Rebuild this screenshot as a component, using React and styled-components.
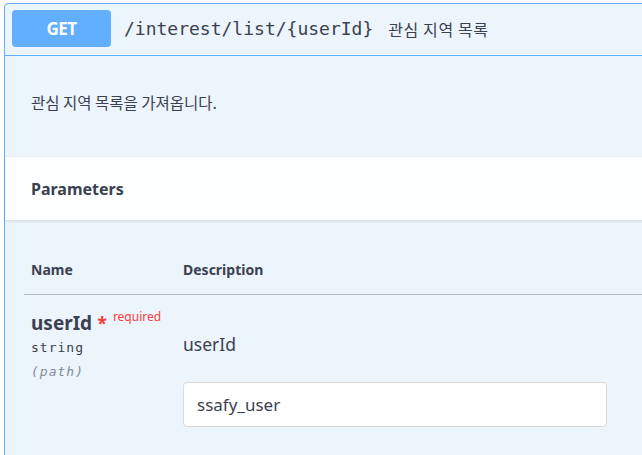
import React from 'react'
import styled, { createGlobalStyle } from 'styled-components'

const GlobalStyle = createGlobalStyle`
  body {
    margin: 0;
    background: #ffffff;
    overflow: hidden;
    font-family: "Noto Sans", "Noto Sans CJK KR", sans-serif;
    color: #3b4151;
  }
`

const Opblock = styled.section`
  margin: 3px -30px 0 4px;
  border: 1px solid #61affe;
  border-radius: 4px 0 0 0;
  background: #ecf4fc;
`

const Summary = styled.div`
  display: flex;
  align-items: center;
  padding: 6px 0 8px 7px;
  border-bottom: 1px solid #61affe;
`

const Method = styled.span`
  display: flex;
  align-items: center;
  justify-content: center;
  width: 99px;
  height: 37px;
  border-radius: 4px;
  background: #61affe;
  color: #ffffff;
  font-weight: 700;
  font-size: 17px;
  letter-spacing: -0.5px;
`

const Path = styled.span`
  margin-left: 13px;
  font-family: "DejaVu Sans Mono", "Liberation Mono", monospace;
  font-size: 18px;
  color: #3b4151;
`

const SummaryText = styled.span`
  margin-left: 15px;
  font-family: "Noto Sans CJK KR", sans-serif;
  font-size: 16px;
  letter-spacing: 0.6px;
  color: #3b4151;
`

const Description = styled.div`
  padding: 33px 26px 42px;
  font-family: "Noto Sans CJK KR", sans-serif;
  font-size: 15.5px;
  line-height: 26px;
  color: #3b4151;
`

const SectionHeader = styled.div`
  display: flex;
  align-items: center;
  height: 63px;
  padding-left: 26px;
  background: rgba(255, 255, 255, 0.85);
  box-shadow: 0 1px 3px rgba(0, 0, 0, 0.12);
`

const SectionTitle = styled.h4`
  margin: 0;
  font-size: 16px;
  font-weight: 700;
  color: #3b4151;
`

const Table = styled.div`
  padding: 0 0 30px 19px;
`

const HeadRow = styled.div`
  display: flex;
  padding: 40px 0 14px 7px;
  border-bottom: 1px solid #b4bcc6;
`

const HeadCell = styled.div`
  width: ${(p) => p.w || 'auto'};
  font-size: 14px;
  font-weight: 700;
  line-height: 20px;
  color: #3b4151;
`

const Row = styled.div`
  display: flex;
  padding: 16px 0 0 7px;
`

const NameCol = styled.div`
  width: 152px;
  flex-shrink: 0;
`

const ParamName = styled.div`
  display: flex;
  align-items: flex-start;
  font-size: 19px;
  font-weight: 700;
  line-height: 24px;
  color: #3b4151;
`

const Required = styled.span`
  margin-left: 5px;
  color: #f93e3e;
  font-size: 18px;
  line-height: 24px;
  font-weight: 700;
`

const RequiredLabel = styled.sup`
  margin-left: 6px;
  margin-top: -4px;
  font-size: 12px;
  font-weight: 400;
  line-height: 20px;
  color: #f93e3e;
`

const ParamType = styled.div`
  margin-top: 2px;
  font-family: "DejaVu Sans Mono", "Liberation Mono", monospace;
  font-size: 13px;
  line-height: 22px;
  letter-spacing: 1px;
  color: #3b4151;
  font-style: ${(p) => (p.italic ? 'italic' : 'normal')};
  opacity: ${(p) => (p.italic ? 0.6 : 1)};
`

const DescCol = styled.div`
  display: flex;
  flex-direction: column;
`

const ParamDesc = styled.div`
  margin-top: 20px;
  font-size: 17.5px;
  line-height: 26px;
  color: #3b4151;
`

const Input = styled.input`
  box-sizing: border-box;
  margin-top: 25px;
  width: 424px;
  height: 45px;
  padding: 0 13px;
  border: 1px solid #d9d9d9;
  border-radius: 4px;
  background: #ffffff;
  font-family: "Noto Sans", sans-serif;
  font-size: 17px;
  color: #3b4151;
  outline: none;
`

export default function App() {
  return (
    <>
      <GlobalStyle />
      <Opblock>
        <Summary>
          <Method>GET</Method>
          <Path>/interest/list/&#123;userId&#125;</Path>
          <SummaryText>관심 지역 목록</SummaryText>
        </Summary>
        <Description>관심 지역 목록을 가져옵니다.</Description>
        <SectionHeader>
          <SectionTitle>Parameters</SectionTitle>
        </SectionHeader>
        <Table>
          <HeadRow>
            <HeadCell w="152px">Name</HeadCell>
            <HeadCell>Description</HeadCell>
          </HeadRow>
          <Row>
            <NameCol>
              <ParamName>
                userId
                <Required>*</Required>
                <RequiredLabel>required</RequiredLabel>
              </ParamName>
              <ParamType>string</ParamType>
              <ParamType italic>(path)</ParamType>
            </NameCol>
            <DescCol>
              <ParamDesc>userId</ParamDesc>
              <Input defaultValue="ssafy_user" />
            </DescCol>
          </Row>
        </Table>
      </Opblock>
    </>
  )
}
